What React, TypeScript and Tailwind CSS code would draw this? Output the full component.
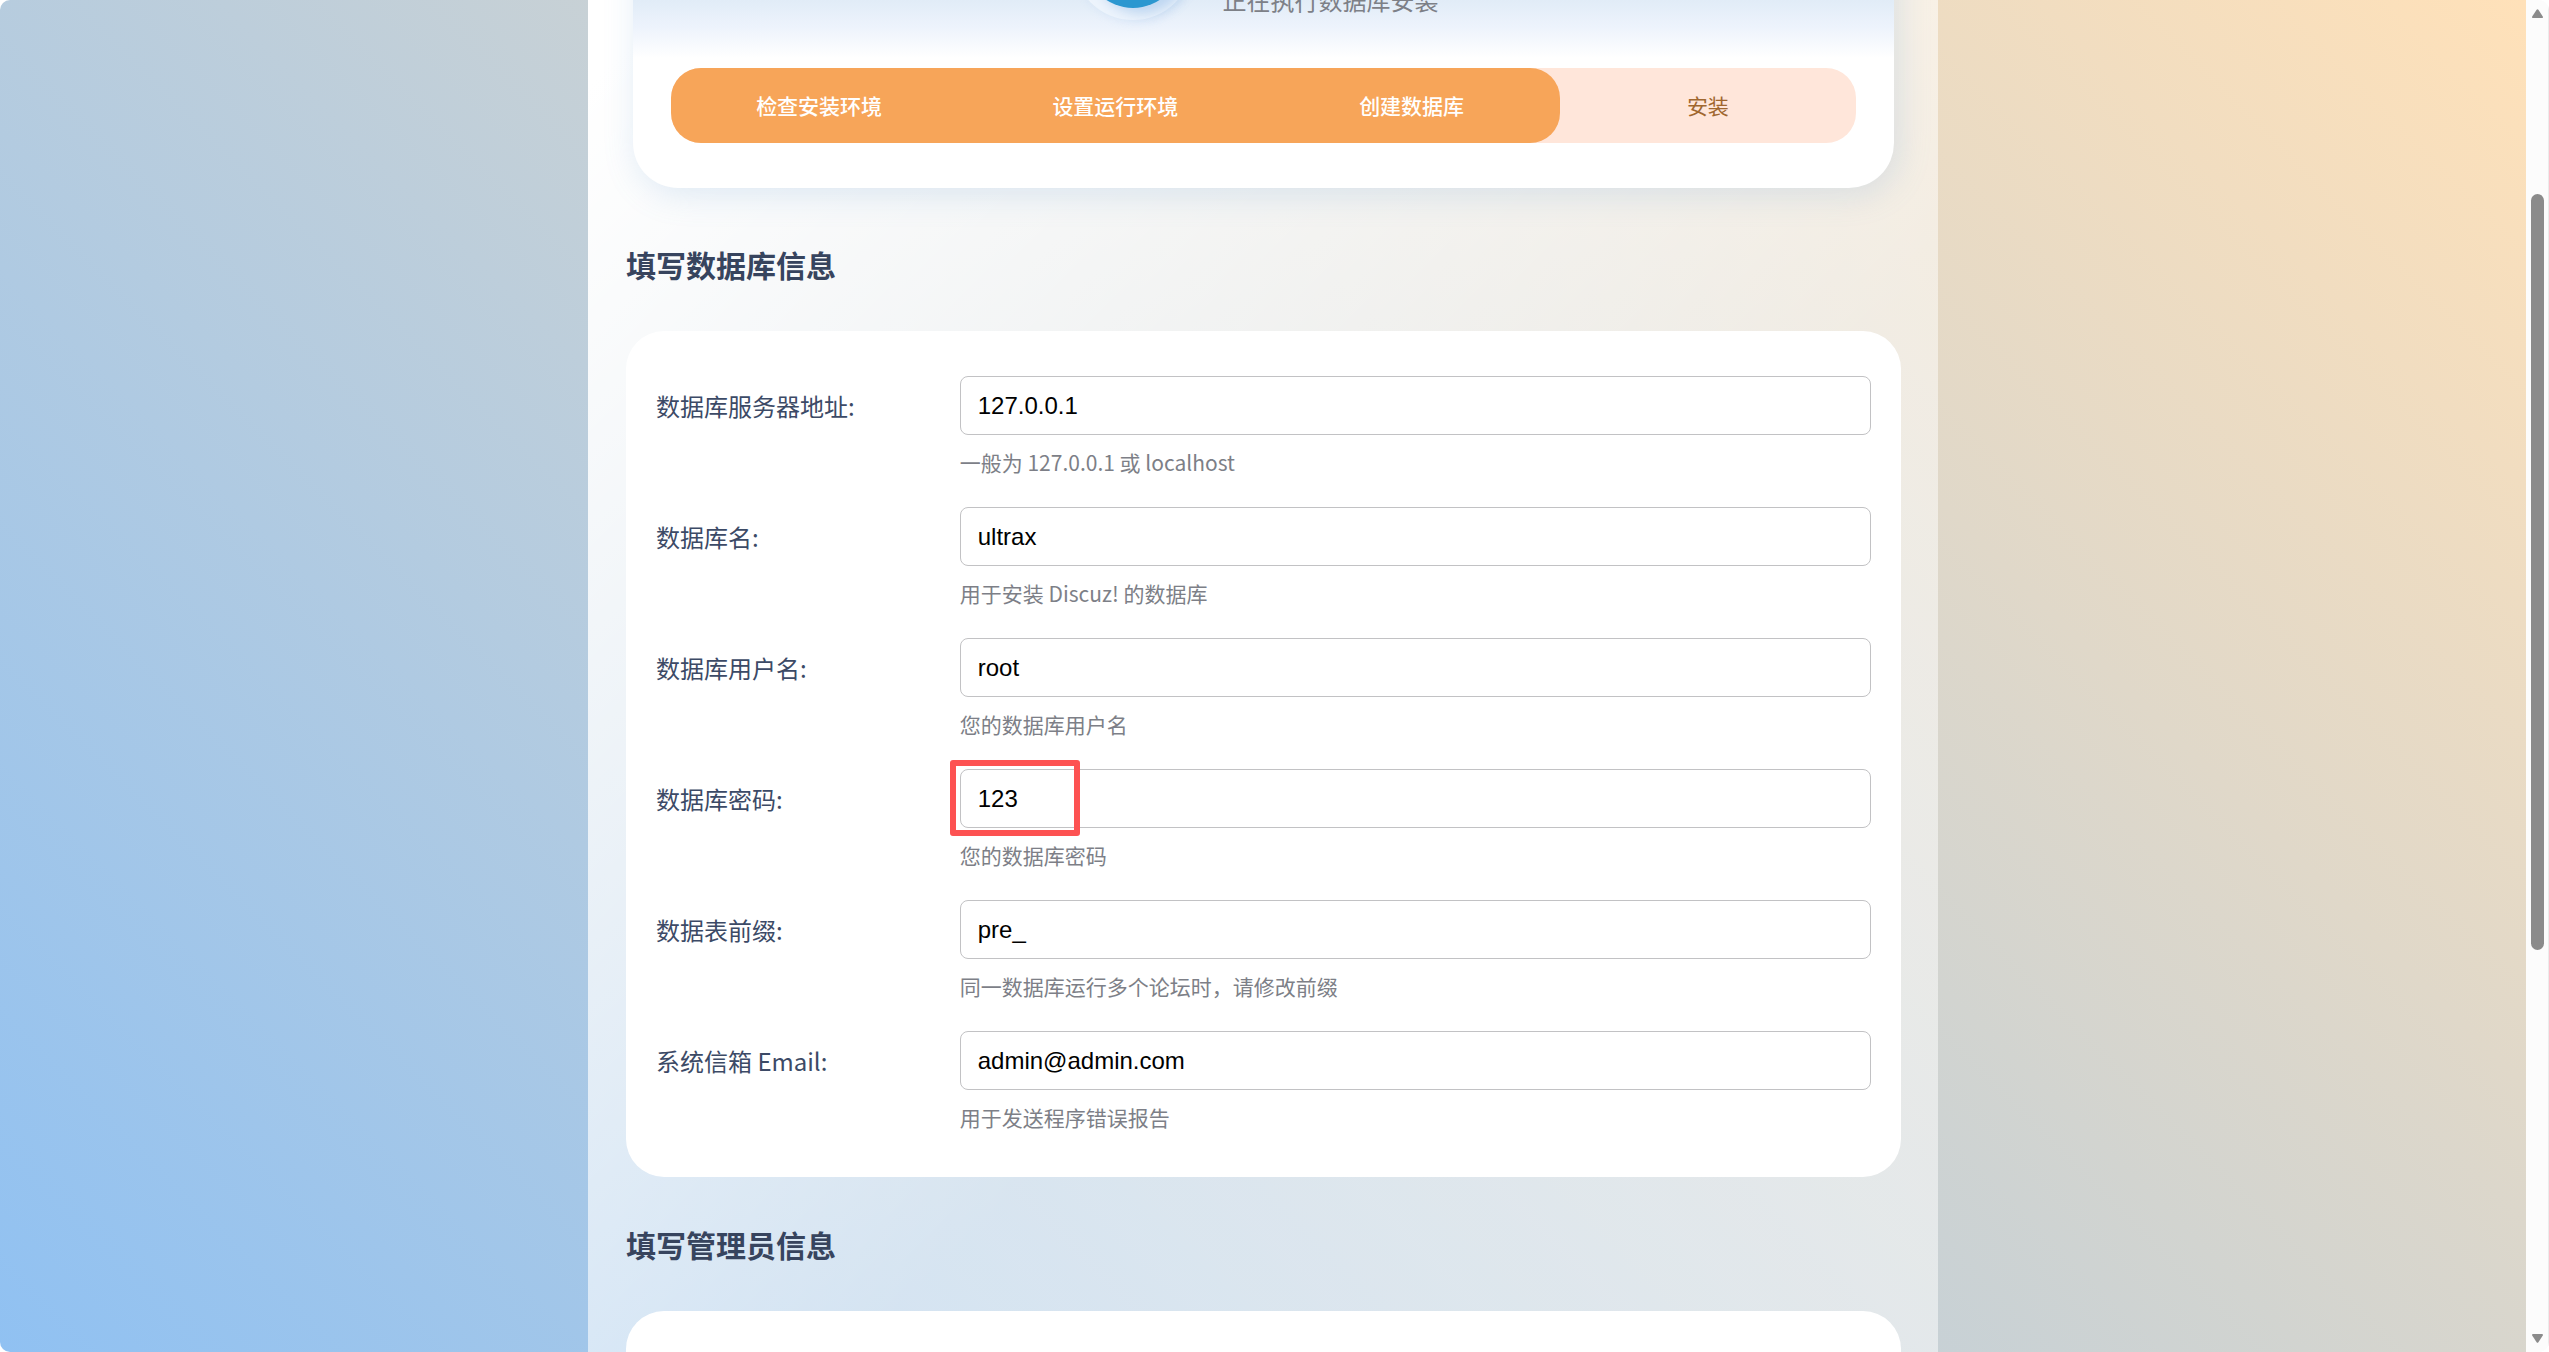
import { useState } from 'react';

interface Field {
  id: string;
  label: string;
  value: string;
  hint: string;
  marked?: boolean;
}

const steps = ['检查安装环境', '设置运行环境', '创建数据库', '安装'];

const dbFields: Field[] = [
  { id: 'dbhost', label: '数据库服务器地址:', value: '127.0.0.1', hint: '一般为 127.0.0.1 或 localhost' },
  { id: 'dbname', label: '数据库名:', value: 'ultrax', hint: '用于安装 Discuz! 的数据库' },
  { id: 'dbuser', label: '数据库用户名:', value: 'root', hint: '您的数据库用户名' },
  { id: 'dbpw', label: '数据库密码:', value: '123', hint: '您的数据库密码', marked: true },
  { id: 'tablepre', label: '数据表前缀:', value: 'pre_', hint: '同一数据库运行多个论坛时，请修改前缀' },
  { id: 'adminemail', label: '系统信箱 Email:', value: 'admin@admin.com', hint: '用于发送程序错误报告' },
];

function StepBar({ current }: { current: number }) {
  return (
    <div className="relative rounded-[30px] bg-[#ffe6da]">
      <div
        className="absolute inset-y-0 left-0 rounded-[30px] bg-[#f7a559]"
        style={{ width: `${(current / steps.length) * 100}%` }}
      />
      <ol className="relative grid grid-cols-4 text-center text-[21px] leading-[75px]">
        {steps.map((step, i) => (
          <li key={step} className={i < current ? 'font-medium text-white' : 'text-[#a0672f]'}>
            {step}
          </li>
        ))}
      </ol>
    </div>
  );
}

function Header() {
  return (
    <header className="mx-[7px] rounded-[45px] bg-white bg-[linear-gradient(180deg,#d6e6f4_0px,#e1ecf7_120px,#edf3fc_147px,#ffffff_178px)] px-[38px] pb-[45px] shadow-[4px_6px_34px_rgba(100,155,210,0.2)]">
      <div className="flex h-[188px] items-start justify-center gap-[30px] pt-5 pr-4">
        <div className="flex size-[120px] items-center justify-center rounded-full bg-[#edf4fc] shadow-[3px_3px_8px_rgba(150,190,235,0.15)]">
          <div className="size-24 rounded-full bg-[#2b97d0] shadow-[9px_6px_12px_rgba(120,170,225,0.4)]" />
        </div>
        <p className="pt-[82px] text-2xl leading-9 text-[#7d8087]">正在执行数据库安装</p>
      </div>
      <StepBar current={3} />
    </header>
  );
}

function FieldRow({ field }: { field: Field }) {
  const [value, setValue] = useState(field.value);

  return (
    <div className="grid grid-cols-4">
      <label htmlFor={field.id} className="text-2xl leading-[60px] text-[#3c4a66]">
        {field.label}
      </label>
      <div className="relative col-span-3">
        <input
          id={field.id}
          type="text"
          value={value}
          onChange={(e) => setValue(e.target.value)}
          className="block h-[59px] w-full rounded-lg border border-[#c2c2c4] bg-white px-[17px] font-['Liberation_Sans',sans-serif] text-2xl text-black outline-none"
        />
        {field.marked && (
          <span className="pointer-events-none absolute -top-[9px] -left-[10px] h-[76px] w-[130px] rounded-[3px] border-6 border-[#fd5252]" />
        )}
        <p className="mt-[11px] text-[21px] leading-8 text-[#7d7f87]">{field.hint}</p>
      </div>
    </div>
  );
}

function ScrollBar() {
  return (
    <div className="flex w-[23px] shrink-0 flex-col items-center border-r border-[#ebebeb] bg-[#fcfcfc] py-[9px]">
      <svg width="11" height="9" viewBox="0 0 11 9" fill="#8b8b8b">
        <path d="M4.6.8Q5.5-.5 6.4.8L10.8 7.4Q11.3 9 10 9H1Q-.3 9 .2 7.4Z" />
      </svg>
      <div className="flex w-full grow flex-col items-center">
        <div className="grow-[176]" />
        <div className="w-[13px] grow-[756] rounded-full bg-[#8b8b8b]" />
        <div className="grow-[384]" />
      </div>
      <svg width="11" height="9" viewBox="0 0 11 9" fill="#8b8b8b">
        <path d="M4.6 8.2Q5.5 9.5 6.4 8.2L10.8 1.6Q11.3 0 10 0H1Q-.3 0 .2 1.6Z" />
      </svg>
    </div>
  );
}

export default function App() {
  return (
    <div className="flex h-screen overflow-hidden rounded-[10px] bg-white font-['Noto_Sans_CJK_SC',sans-serif]">
      <div className="flex grow justify-center overflow-hidden bg-[linear-gradient(45deg,#90c1f2,#ffe1b9)]">
        <main className="w-full max-w-[1350px] bg-[linear-gradient(135deg,#ffffff_60px,rgba(255,255,255,0.5)_1150px)] pr-[37px] pl-[38px]">
          <div className="-mt-[120px]">
            <Header />
            <h2 className="mt-[54px] text-3xl leading-[44px] font-bold text-[#37445e]">填写数据库信息</h2>
            <form className="mt-[45px] flex flex-col gap-[29px] rounded-[38px] bg-white px-[30px] pt-[45px] pb-11">
              {dbFields.map((field) => (
                <FieldRow key={field.id} field={field} />
              ))}
            </form>
            <h2 className="mt-[45px] text-3xl leading-[44px] font-bold text-[#37445e]">填写管理员信息</h2>
            <section className="mt-[45px] h-80 rounded-[38px] bg-white" />
          </div>
        </main>
      </div>
      <ScrollBar />
    </div>
  );
}
